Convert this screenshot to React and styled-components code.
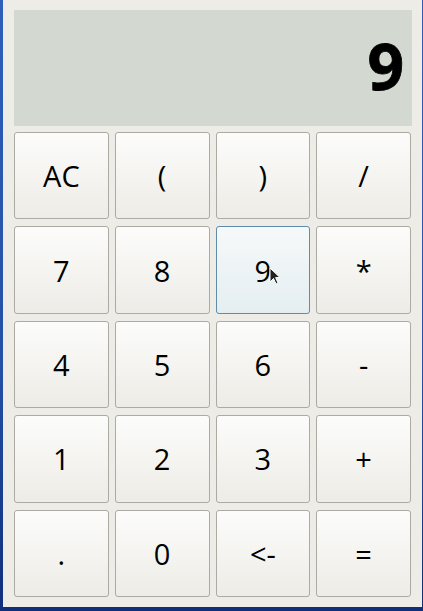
import React from "react";
import styled, { createGlobalStyle } from "styled-components";

const GlobalStyle = createGlobalStyle`
  html, body {
    margin: 0;
    padding: 0;
  }
  body {
    width: 423px;
    height: 611px;
    overflow: hidden;
    background: linear-gradient(180deg, #2f5fb8 0%, #2450a6 60%, #0f2f7a 100%);
    font-family: "Open Sans", "Noto Sans", sans-serif;
  }
`;

const keys = [
  "AC", "(", ")", "/",
  "7", "8", "9", "*",
  "4", "5", "6", "-",
  "1", "2", "3", "+",
  ".", "0", "<-", "=",
];

const App = () => {
  return (
    <>
      <GlobalStyle />
      <Window>
        <Display>9</Display>
        <Pad>
          {keys.map((k) => (
            <Key key={k} $hover={k === "9"}>
              {k}
              {k === "9" && (
                <Cursor width="12" height="19" viewBox="0 0 12 19">
                  <path
                    d="M1 1 L1 15 L4.5 11.5 L7 17 L9 16 L6.6 10.6 L11 10.6 Z"
                    fill="#222"
                    stroke="#fff"
                    strokeWidth="1"
                    strokeLinejoin="round"
                  />
                </Cursor>
              )}
            </Key>
          ))}
        </Pad>
      </Window>
    </>
  );
};

const Window = styled.div`
  box-sizing: border-box;
  width: 419px;
  height: 607px;
  margin-left: 3px;
  background: #edece7;
  padding: 10px 10px 10px 11px;
  display: flex;
  flex-direction: column;
  gap: 6px;
`;

const Display = styled.div`
  height: 116px;
  flex: none;
  background: #d3d9d0;
  display: flex;
  align-items: center;
  justify-content: flex-end;
  padding: 0 8px 6px 0;
  box-sizing: border-box;
  font-family: "Noto Sans", "Open Sans", sans-serif;
  font-weight: 700;
  font-size: 64px;
  color: #000;
  -webkit-text-stroke: 0.8px #000;
`;

const Pad = styled.div`
  flex: 1;
  display: grid;
  grid-template-columns: repeat(4, 1fr);
  grid-template-rows: repeat(5, 1fr);
  column-gap: 6px;
  row-gap: 7px;
  padding-right: 1px;
`;

const Key = styled.button`
  position: relative;
  margin: 0;
  padding: 0;
  border: 1px solid ${(p) => (p.$hover ? "#5f8ca8" : "#abaaa3")};
  border-radius: 3px;
  background: ${(p) =>
    p.$hover
      ? "linear-gradient(180deg, #f6f9fa 0%, #e4eef1 100%)"
      : "linear-gradient(180deg, #fcfcfb 0%, #edece6 100%)"};
  font-family: "Open Sans", "Noto Sans", sans-serif;
  font-size: 29px;
  color: #000;
  display: flex;
  align-items: center;
  justify-content: center;
`;

const Cursor = styled.svg`
  position: absolute;
  left: 52px;
  top: 40px;
`;

export default App;
